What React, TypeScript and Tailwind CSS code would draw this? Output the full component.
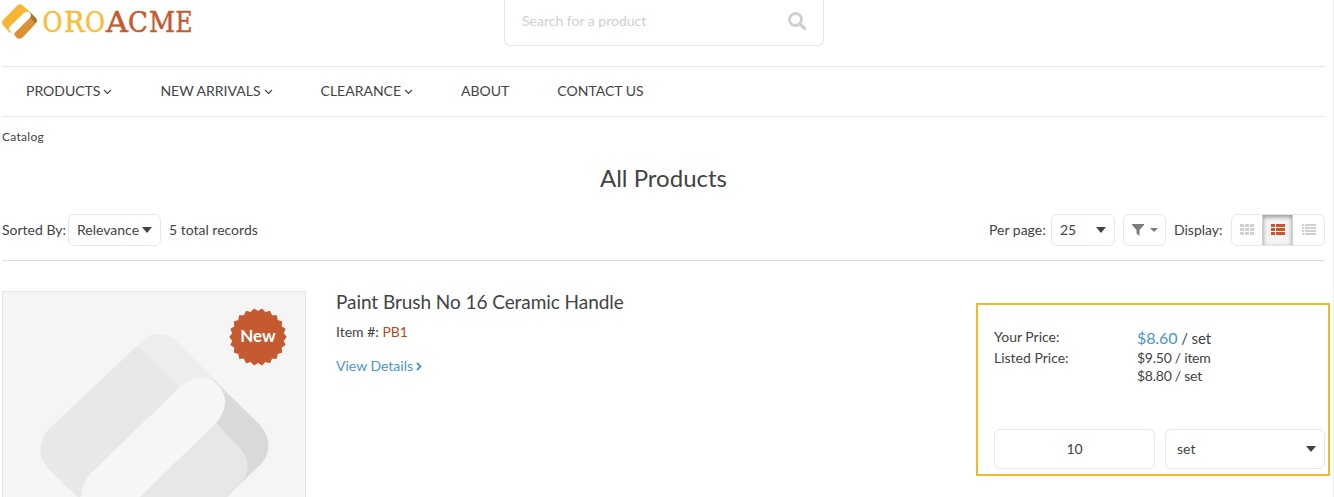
import React from "react";

const starPoints = Array.from({ length: 44 }, (_, i) => {
  const r = i % 2 === 0 ? 28.8 : 26;
  const a = (i * Math.PI) / 22;
  return `${(29 + r * Math.cos(a)).toFixed(2)},${(29 + r * Math.sin(a)).toFixed(2)}`;
}).join(" ");

function Caret({ className = "" }: { className?: string }) {
  return (
    <svg className={`shrink-0 ${className}`} width="10" height="6" viewBox="0 0 10 6">
      <path d="M0 0h10L5 6z" fill="currentColor" />
    </svg>
  );
}

const wordmark = [
  ["O", 42.5, 20], ["R", 64, 20.5], ["O", 85, 20],
  ["A", 106, 22], ["C", 128, 20], ["M", 149, 26], ["E", 175.500, 17],
] as const;

function Logo() {
  return (
    <svg className="-ml-0.5 block" width="196" height="42" viewBox="0 0 196 42">
      <path d="M2.800 20.200 17.500 5.300Q20 3 22.500 5.300L31 13 10 33 2.800 25Q1.200 22.500 2.800 20.200z" fill="#f8b534" />
      <path d="M30 12 36 18Q38 20.500 36 23L33.500 25 27 18z" fill="#a77432" />
      <path d="M29.500 17 34 22Q35.500 24 34 25.500L22.500 37.500Q19.500 40.200 16.500 37.500L11 31.500z" fill="#db9133" />
      <path d="M10 26.500 23.500 13.200Q27 10.300 30 12.800 32 15.500 29.500 18.200L15 32.500 14 35 9 29.800Q8.600 28 10 26.500z" fill="#fff" />
      {wordmark.map(([letter, x, width], i) => (
        <text key={x} x={x} y="31.800" textLength={width} lengthAdjust="spacingAndGlyphs" fontFamily="'DejaVu Serif', serif" fontSize="27" strokeWidth="0.500" stroke={i < 3 ? "#f9bd39" : "#c55a30"} fill={i < 3 ? "#f9bd39" : "#c55a30"}>{letter}</text>
      ))}
    </svg>
  );
}

function NavItem({ label, menu }: { label: string; menu?: boolean }) {
  return (
    <a className="flex items-center">
      {label}
      {menu && (
        <svg className="ml-[3px] mt-0.5" width="9" height="6" viewBox="0 0 9 6">
          <path d="M1 1l3.500 3.500L8 1" fill="none" stroke="currentColor" strokeWidth="1.100" />
        </svg>
      )}
    </a>
  );
}

function Header() {
  return (
    <header className="flex h-[66px] items-start">
      <div className="w-[502px]"><Logo /></div>
      <div className="flex h-[46px] w-80 items-center justify-between rounded-b-md border border-t-0 border-[#e6e6e6] pr-[17px] pb-[3px] pl-[17px] text-[#cfcfcf]">
        <span>Search for a product</span>
        <svg width="18" height="18" viewBox="0 0 18 18">
          <circle cx="7.500" cy="7.500" r="6" fill="none" stroke="currentColor" strokeWidth="2.800" />
          <path d="M12 12l4.500 4.500" stroke="currentColor" strokeWidth="3.200" strokeLinecap="round" />
        </svg>
      </div>
    </header>
  );
}

function Toolbar() {
  return (
    <div className="flex h-[47px] items-start border-b border-[#dcdcdc]">
      <div className="flex h-8 items-center">
        <span className="w-[66px]">Sorted By:</span>
        <div className="flex h-8 w-[93px] items-center justify-between rounded-md border border-[#e6e6e6] pr-2 pl-2">
          <span>Relevance</span>
          <Caret />
        </div>
        <span className="ml-2">5 total records</span>
      </div>
      <div className="ml-auto flex h-8 items-center">
        <span className="w-[62px]">Per page:</span>
        <div className="flex h-8 w-16 items-center justify-between rounded-md border border-[#e6e6e6] px-2">
          <span>25</span>
          <Caret />
        </div>
        <div className="ml-2 flex h-8 w-[43px] items-center gap-1.5 rounded-md border border-[#e6e6e6] pl-2 text-[#7c7c7c]">
          <svg width="12" height="12" viewBox="0 0 12 12">
            <path d="M0 0h12v1L7.500 6v6L4.500 9.500V6L0 1z" fill="currentColor" />
          </svg>
          <svg width="8" height="4" viewBox="0 0 8 4"><path d="M0 0h8L4 4z" fill="currentColor" /></svg>
        </div>
        <span className="ml-2 w-[57px]">Display:</span>
        <div className="flex h-8 w-[94px] overflow-hidden rounded-md border border-[#e6e6e6] text-[#d0d0d0]">
          <div className="flex w-[30px] items-center justify-center pb-px">
            <svg width="14" height="11" viewBox="0 0 14 11" fill="currentColor">
              {[0, 4, 8].map((y) => [0, 5, 10].map((x) => <rect key={`${x}-${y}`} x={x} y={y} width="4" height="3" />))}
            </svg>
          </div>
          <div className="flex w-[31px] items-center justify-center border-x border-[#cfcfcf] bg-[#f4f4f4] pb-px pl-px text-[#c9552b] shadow-[inset_0_2px_4px_rgba(0,0,0,0.4)]">
            <svg width="14" height="11" viewBox="0 0 14 11" fill="currentColor">
              {[0, 4, 8].map((y) => <path key={y} d={`M0 ${y}h4v3H0zM5 ${y}h9v3H5z`} />)}
            </svg>
          </div>
          <div className="flex w-[31px] items-center justify-center pb-px pl-px">
            <svg width="14" height="11" viewBox="0 0 14 11" fill="currentColor">
              {[0, 3, 6, 9].map((y) => <path key={y} d={`M0 ${y}h2v2H0zM3 ${y}h11v2H3z`} />)}
            </svg>
          </div>
        </div>
      </div>
    </div>
  );
}

function ProductImage() {
  return (
    <div className="relative h-[306px] w-[304px] shrink-0 border border-[#e6e6e6] bg-[#f5f5f5]">
      <svg className="block" width="302" height="304" viewBox="3 292 302 304">
        <path d="M47 431 138 345 180 387 79 498Q60 481 46 466Q34 449 47 431Z" fill="#e8e8e8" />
        <path d="M138 345 145 339Q150 334 159 334Q168 334 176 341L222 387 201 396 180 387Z" fill="#ededed" />
        <path d="M214 380 260 425Q276 445 262 463L220 503 200 430Z" fill="#d7d9da" />
        <path d="M216 423 239 447Q254 464 243 480L150 575 130 500Z" fill="#e7e7e7" />
        <path d="M79 498 150 575 230 494 130 500Z" fill="#e7e7e7" />
        <path d="M180 387Q190 378 201 378Q212 378 219 386Q232 402 217 422L139 498 112 525Q80 525 82 492Q83 482 90 474Z" fill="#f6f6f6" />
      </svg>
      <div className="absolute top-[16px] left-[226px] flex h-[58px] w-[58px] items-center justify-center">
        <svg className="absolute inset-0" width="58" height="58" viewBox="0 0 58 58">
          <polygon points={starPoints} fill="#c55a30" />
        </svg>
        <span className="relative pb-[3px] text-[17px] leading-none font-bold text-white">New</span>
      </div>
    </div>
  );
}

function PriceBox() {
  return (
    <div className="mt-3 ml-auto h-[173px] w-[354px] shrink-0 border-2 border-[#efbb2b] pl-4">
      <div className="grid h-[124px] grid-cols-[143px_1fr] content-start pt-[22px]">
        <span className="leading-5">Your Price:</span>
        <span className="h-[22px] text-[15px] leading-[21px] tracking-[-0.1px]"><span className="text-base leading-[21px] text-[#4a95cc]">$8.60</span> / set</span>
        <span className="leading-[18px]">Listed Price:</span>
        <span className="leading-[18px] tracking-[-0.25px]">$9.50 / item<br />$8.80 / set</span>
      </div>
      <div className="flex gap-2.5">
        <div className="flex h-10 w-[161px] items-center justify-center rounded-md border border-[#e6e6e6]">10</div>
        <div className="flex h-10 w-40 items-center justify-between rounded-md border border-[#e6e6e6] pr-2 pl-[11px]">
          <span>set</span>
          <Caret />
        </div>
      </div>
    </div>
  );
}

export default function App() {
  return (
    <div className="h-[497px] overflow-hidden border-r border-[#eeeeee] bg-white pl-0.5 font-['Lato',sans-serif] text-sm leading-5 text-[#434343]">
      <div className="w-[1323px]">
        <Header />
        <nav className="flex h-[51px] items-center gap-12 border-y border-[#e6e6e6] pb-[2px] pl-6">
          <NavItem label="PRODUCTS" menu />
          <NavItem label="NEW ARRIVALS" menu />
          <NavItem label="CLEARANCE" menu />
          <NavItem label="ABOUT" />
          <NavItem label="CONTACT US" />
        </nav>
        <div className="h-[46px] pt-[10px] text-xs leading-5 tracking-[0.3px]">Catalog</div>
        <h1 className="h-[51px] text-center text-2xl leading-[30px]">All Products</h1>
        <Toolbar />
      </div>
      <main className="flex w-[1328px] items-start pt-[30px]">
        <ProductImage />
        <div className="pl-[30px]">
          <h2 className="text-[19px] leading-[22px] tracking-[-0.06px]">Paint Brush No 16 Ceramic Handle</h2>
          <p className="mt-[9px]">Item #: <span className="text-[#b84824]">PB1</span></p>
          <a className="mt-[14px] flex items-center text-[#4a95cc]">
            View Details
            <svg className="ml-[3px]" width="6" height="9" viewBox="0 0 6 9"><path d="M1 1l3.500 3.500L1 8" fill="none" stroke="currentColor" strokeWidth="1.800" /></svg>
          </a>
        </div>
        <PriceBox />
      </main>
    </div>
  );
}
